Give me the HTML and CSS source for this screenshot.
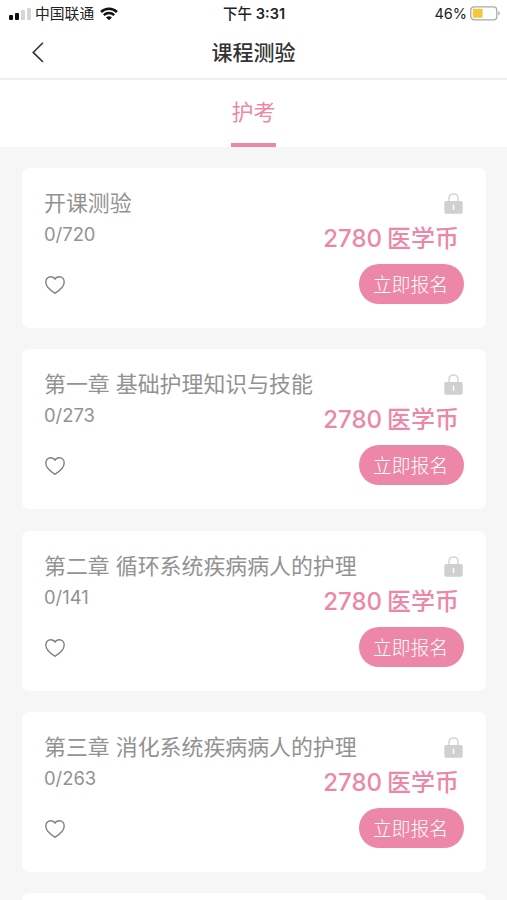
FILE: index.html
```html
<!DOCTYPE html>
<html lang="zh-CN">
<head>
  <meta charset="UTF-8">
  <meta name="viewport" content="width=device-width, initial-scale=1.0">
  <title>课程测验</title>
  <link rel="stylesheet" href="styles.css">
</head>
<body>
  <svg class="sprite" aria-hidden="true">
    <symbol id="icon-heart" viewBox="0 0 20 18">
      <path d="M10 17.3C8.4 16.3 .8 11.8 .8 6.1C.8 3 2.9 .8 5.6 .8C7.6 .8 9.2 1.7 10 3.2C10.8 1.7 12.4 .8 14.4 .8C17.1 .8 19.2 3 19.2 6.1C19.2 11.8 11.6 16.3 10 17.3Z" fill="none" stroke="#808080" stroke-width="1.4" stroke-linejoin="round"/>
    </symbol>
    <symbol id="icon-lock" viewBox="0 0 19 21">
      <path d="M5 9V5.2C5 2.7 6.8 1 9.5 1S14 2.7 14 5.2V9" fill="none" stroke="#d6d6d6" stroke-width="1.5"/>
      <rect x=".3" y="8" width="18.4" height="12.8" rx="1.8" fill="#d0d0d0"/>
      <path d="M9.5 11.8V16.8" stroke="#fff" stroke-width="1.4"/>
    </symbol>
  </svg>

  <div class="status-bar">
    <div class="status-left">
      <div class="signal">
        <span></span>
        <span></span>
        <span class="off"></span>
        <span class="off"></span>
      </div>
      <span class="carrier">中国联通</span>
      <svg class="wifi" viewBox="0 0 18 14">
        <path d="M1 5C5.5 .6 12.5 .6 17 5M3.8 8.2C6.8 5.4 11.2 5.4 14.2 8.2" fill="none" stroke="#111" stroke-width="2.5"/>
        <path d="M6 10.4C7.8 8.9 10.2 8.9 12 10.4L9 13.3Z" fill="#111"/>
      </svg>
    </div>
    <div class="status-time">下午 <b>3:31</b></div>
    <div class="status-right">
      <span>46%</span>
      <svg class="battery" viewBox="0 0 31 15">
        <rect x=".8" y=".8" width="26" height="13" rx="3.4" fill="#fff" stroke="#aaa" stroke-width="1.3"/>
        <rect x="2.8" y="2.8" width="9.8" height="9" rx="1.2" fill="#f5c73e"/>
        <path d="M28.3 5.2C30.4 6 30.4 8.6 28.3 9.4Z" fill="#aaa"/>
      </svg>
    </div>
  </div>

  <header class="nav-bar">
    <svg class="back" viewBox="0 0 12 21">
      <path d="M11 .8L1.2 10.4L11 20" fill="none" stroke="#333" stroke-width="1.6"/>
    </svg>
    <h1>课程测验</h1>
  </header>

  <nav class="tabs">
    <a class="tab active" href="#">护考</a>
  </nav>

  <main class="list">
    <section class="card">
      <div class="info">
        <h2>开课测验</h2>
        <p class="count">0/720</p>
        <svg class="heart"><use href="#icon-heart"/></svg>
      </div>
      <div class="action">
        <svg class="lock"><use href="#icon-lock"/></svg>
        <p class="price"><span>2780</span>医学币</p>
        <button class="btn">立即报名</button>
      </div>
    </section>
    <section class="card">
      <div class="info">
        <h2>第一章 基础护理知识与技能</h2>
        <p class="count">0/273</p>
        <svg class="heart"><use href="#icon-heart"/></svg>
      </div>
      <div class="action">
        <svg class="lock"><use href="#icon-lock"/></svg>
        <p class="price"><span>2780</span>医学币</p>
        <button class="btn">立即报名</button>
      </div>
    </section>
    <section class="card">
      <div class="info">
        <h2>第二章 循环系统疾病病人的护理</h2>
        <p class="count">0/141</p>
        <svg class="heart"><use href="#icon-heart"/></svg>
      </div>
      <div class="action">
        <svg class="lock"><use href="#icon-lock"/></svg>
        <p class="price"><span>2780</span>医学币</p>
        <button class="btn">立即报名</button>
      </div>
    </section>
    <section class="card">
      <div class="info">
        <h2>第三章 消化系统疾病病人的护理</h2>
        <p class="count">0/263</p>
        <svg class="heart"><use href="#icon-heart"/></svg>
      </div>
      <div class="action">
        <svg class="lock"><use href="#icon-lock"/></svg>
        <p class="price"><span>2780</span>医学币</p>
        <button class="btn">立即报名</button>
      </div>
    </section>
    <section class="card"></section>
  </main>
</body>
</html>
```
FILE: styles.css
```css
:root {
  --pink: #ed87a8;
  --gray: #929292;
}
* {
  margin: 0;
  padding: 0;
  box-sizing: border-box;
}
body {
  height: 900px;
  overflow: hidden;
  background: #f6f6f6;
  font-family: Inter, "Noto Sans CJK SC", sans-serif;
}
svg {
  display: block;
  flex-shrink: 0;
}
.sprite {
  display: none;
}

/* status bar */
.status-bar {
  display: grid;
  grid-template-columns: 1fr auto 1fr;
  align-items: center;
  height: 27px;
  padding: 0 6px 0 9px;
  background: #fff;
  color: #222;
  font-size: 14.5px;
  line-height: 27px;
}
.status-left {
  display: flex;
  align-items: center;
}
.signal {
  display: flex;
  align-items: flex-end;
  gap: 2px;
  height: 12px;
  margin-right: 4px;
}
.signal span {
  width: 4px;
  height: 5px;
  border-radius: 1px;
  background: #111;
}
.signal span:nth-child(2) { height: 7px; }
.signal span:nth-child(3) { height: 10px; }
.signal span:nth-child(4) { height: 12px; }
.signal .off { background: #d6d6d6; }
.carrier {
  padding-top: 1px;
  font-size: 14.8px;
  line-height: 26px;
}
.wifi {
  width: 18px;
  height: 14px;
  margin-left: 6px;
}
.status-time {
  margin-right: 2px;
  font-weight: 500;
}
.status-time b {
  font-weight: 600;
}
.status-right {
  display: flex;
  align-items: center;
  justify-content: flex-end;
  gap: 3px;
}
.battery {
  width: 31px;
  height: 15px;
}

/* title */
.nav-bar {
  display: grid;
  grid-template-columns: 1fr auto 1fr;
  align-items: center;
  height: 53px;
  padding-left: 32px;
  padding-right: 32px;
  border-bottom: 2px solid #efefef;
  background: #fff;
}
.back {
  width: 12px;
  height: 21px;
}
.nav-bar h1 {
  color: #333;
  font-size: 21px;
  font-weight: 500;
  line-height: 51px;
}

/* tabs */
.tabs {
  display: flex;
  justify-content: center;
  height: 67px;
  background: #fff;
}
.tab {
  height: 67px;
  color: var(--pink);
  font-size: 22px;
  line-height: 64px;
  text-decoration: none;
}
.tab.active {
  border-bottom: 4px solid var(--pink);
}

/* cards */
.list {
  display: flex;
  flex-direction: column;
  gap: 21.3px;
  height: 753px;
  padding: 21px 21px 0 22px;
  overflow: hidden;
}
.card {
  display: flex;
  justify-content: space-between;
  flex-shrink: 0;
  height: 160px;
  padding: 22px;
  border-radius: 7px;
  background: #fff;
}
.info {
  flex: 1;
  min-width: 0;
}
.card h2 {
  color: var(--gray);
  font-size: 21.9px;
  font-weight: 400;
  line-height: 26px;
  white-space: nowrap;
}
.count {
  margin-top: 6px;
  color: var(--gray);
  font-size: 18.4px;
  line-height: 24px;
}
.heart {
  width: 20px;
  height: 18px;
  margin: 30px 0 0 1px;
}
.action {
  display: flex;
  flex-direction: column;
  flex-shrink: 0;
  align-items: flex-end;
}
.lock {
  width: 19px;
  height: 21px;
  margin: 3px 1px 0 0;
}
.price {
  margin: 10px 5px 0 0;
  color: var(--pink);
  font-size: 24px;
  font-weight: 500;
  line-height: 30px;
  white-space: nowrap;
}
.price span {
  margin-right: 5px;
}
.btn {
  width: 105px;
  height: 40px;
  margin-top: 10px;
  padding-top: 3px;
  padding-right: 2px;
  border: none;
  border-radius: 20px;
  background: var(--pink);
  color: #fff;
  font-family: inherit;
  font-size: 18.8px;
  font-weight: 300;
  line-height: 37px;
}
```
